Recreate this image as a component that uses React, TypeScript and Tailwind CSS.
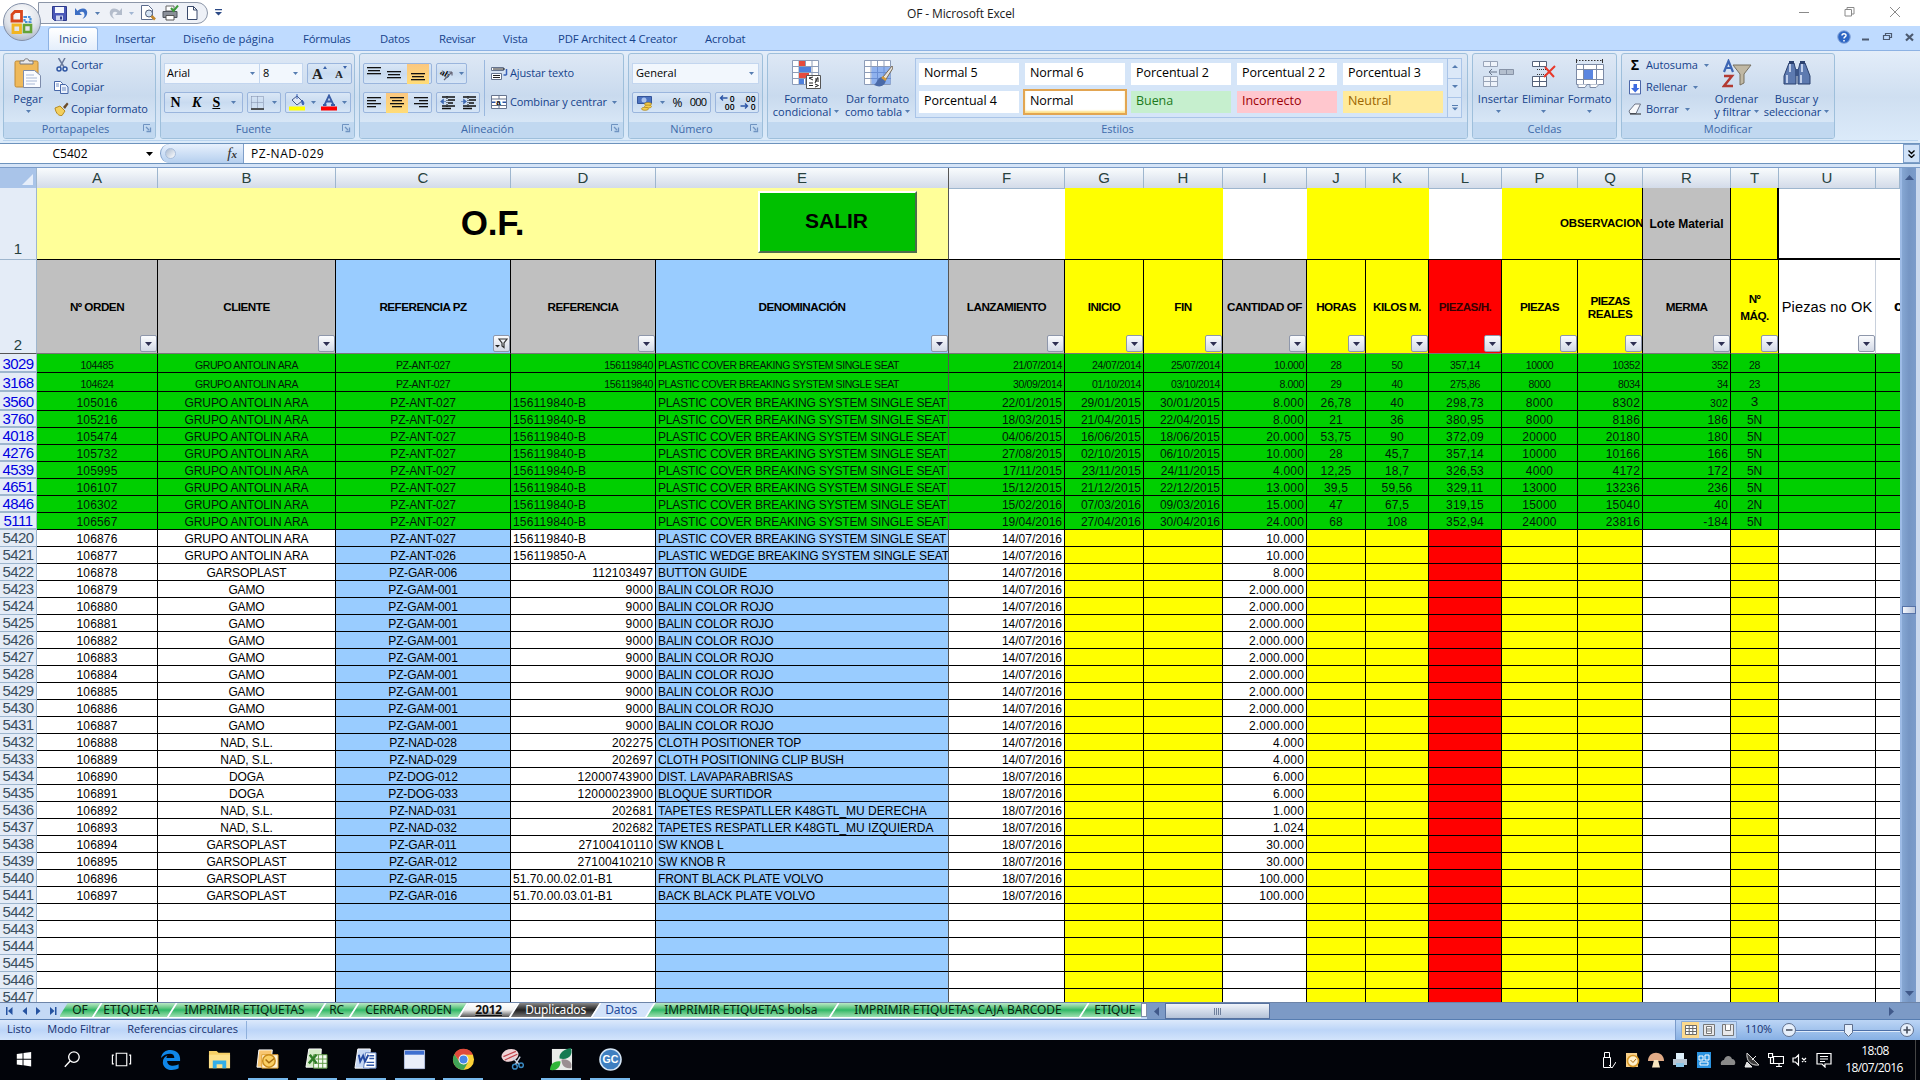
import React from "react";

type Kids = { children?: React.ReactNode };

const UI = "font-['Open_Sans','Noto_Sans',sans-serif]";
const ARIAL = "font-['Liberation_Sans',Arial,sans-serif]";

/* ---------- small shared pieces ---------- */

function Caret({ className = "" }: { className?: string }) {
  return (
    <svg width="5" height="3" viewBox="0 0 5 3" className={"shrink-0 " + className}>
      <path d="M0 0h5L2.5 3z" fill="#567db1" />
    </svg>
  );
}

function Launcher() {
  return (
    <svg width="9" height="9" viewBox="0 0 9 9" className="absolute right-[3px] top-[2px]">
      <path d="M.5 7V.5H7" fill="none" stroke="#6f93c1" />
      <path d="M3 3l3 3M7.5 3.5v4h-4" fill="none" stroke="#6f93c1" strokeWidth="1.3" />
    </svg>
  );
}

function Group({ w, label, launcher, children }: Kids & { w: string; label: string; launcher?: boolean }) {
  return (
    <section className={"flex h-[86px] shrink-0 flex-col overflow-hidden rounded-[3px] border border-[#9ebfdb] bg-gradient-to-b from-[#dee8f5] via-[#c9daee] to-[#e0eefb] " + w}>
      <div className="flex h-[68px] shrink-0">{children}</div>
      <div className="relative h-[16px] bg-[#c1d8f0] text-center text-[11px] leading-[14px] text-[#3e6aaa]">
        <span className={launcher ? "mr-[8px]" : ""}>{label}</span>
        {launcher && <Launcher />}
      </div>
    </section>
  );
}

function Btn({ children, className = "" }: Kids & { className?: string }) {
  return (
    <div className={"flex h-[21px] shrink-0 items-center justify-around rounded-[2px] border border-[#9ab5dd] bg-gradient-to-b from-[#dae7f6] via-[#c9dbf0] to-[#d6e5f6] " + className}>
      {children}
    </div>
  );
}

function Lines({ rows, className = "" }: { rows: number[][]; className?: string }) {
  return (
    <svg width="16" height="14" viewBox="0 0 16 14" className={className}>
      {rows.map(([x, y, w], i) => (
        <rect key={i} x={x} y={y} width={w} height="1.3" fill="#111" />
      ))}
    </svg>
  );
}

const LEFT = [[1, 1, 14], [1, 4, 9], [1, 7, 14], [1, 10, 9]];
const CENTER = [[1, 1, 14], [3, 4, 10], [1, 7, 14], [3, 10, 10]];
const RIGHT = [[1, 1, 14], [6, 4, 9], [1, 7, 14], [6, 10, 9]];
const TOP = [[1, 0, 14], [2, 3, 12], [1, 6, 14]];
const MID = [[1, 4, 14], [2, 7, 12], [1, 10, 14]];
const BOT = [[1, 6, 14], [2, 9, 12], [1, 12, 14]];

function Indent({ flip }: { flip?: boolean }) {
  return (
    <svg width="16" height="14" viewBox="0 0 16 14">
      <path d="M2 1h13M8 4h7M8 7h5M2 10h13M2 12.500h9" stroke="#111" strokeWidth="1.300" />
      <path d="M7 0v14" stroke="#111" strokeDasharray="1 1" />
      <path d={flip ? "M0 5.500h3M2.500 3l3 2.500-3 2.500z" : "M6 5.500H3M3.500 3l-3 2.500 3 2.500z"} fill="#3c66b0" stroke="#3c66b0" strokeWidth=".6" />
    </svg>
  );
}

/* ---------- title bar ---------- */

function OfficeButton() {
  return (
    <svg width="40" height="40" viewBox="0 0 40 40" className="absolute left-[2px] top-[2px] z-10">
      <defs>
        <radialGradient id="orb" cx=".5" cy=".3" r=".75">
          <stop offset="0" stopColor="#ffffff" />
          <stop offset=".6" stopColor="#dfe3ea" />
          <stop offset="1" stopColor="#a9b4c6" />
        </radialGradient>
      </defs>
      <circle cx="20" cy="20" r="18.500" fill="url(#orb)" stroke="#8390a8" />
      <g fill="none" strokeWidth="2.800">
        <path d="M13 9.500h6.500v9.500h-9.500v-6.500z" stroke="#d9461b" />
        <path d="M22.500 15h6v5h-6z" stroke="#4a8fd8" strokeWidth="2.200" strokeDasharray="2.500 1" />
        <path d="M11 23h7.500v7.500H11z" stroke="#f2b522" />
        <path d="M22 23h7v7h-7z" stroke="#64a336" strokeWidth="2.600" />
      </g>
    </svg>
  );
}

function TitleBar() {
  return (
    <header className="relative flex h-[26px] items-start bg-white">
      <OfficeButton />
      <div className="ml-[38px] mt-[2px] flex h-[22px] w-[170px] shrink-0 items-center rounded-r-full border border-[#8c96a8] bg-[#eef1f7] pl-[13px]">
        <svg width="15" height="15" viewBox="0 0 15 15">
          <path d="M.5.500h14v14h-12l-2-2z" fill="#4a58b8" stroke="#2d3a8c" />
          <path d="M3 1h9v6H3z" fill="#f4f7fd" />
          <path d="M4 9.500h7v5H4z" fill="#cdd4ee" />
          <path d="M8 10.500h2v3H8z" fill="#2d3a8c" />
        </svg>
        <svg width="14" height="13" viewBox="0 0 14 13" className="ml-[8px]">
          <path d="M0 1v7h7L4.500 5.800C7 3.600 10 5 9.500 9L7.500 12C14 9.500 13.500 1.500 8 1.500 5.500 1.500 3.800 2.500 2.600 4z" fill="#3d6fc4" />
        </svg>
        <Caret className="ml-[6px]" />
        <svg width="14" height="13" viewBox="0 0 14 13" className="ml-[8px]">
          <path d="M14 1v7H7l2.500-2.200C7 3.600 4 5 4.500 9l2 3C0 9.500.5 1.500 6 1.500c2.500 0 4.200 1 5.400 2.500z" fill="#b3bccb" />
        </svg>
        <Caret className="ml-[7px] opacity-50" />
        <svg width="16" height="16" viewBox="0 0 16 16" className="ml-[6px] shrink-0">
          <path d="M1.500.500h7l4 4v10h-11z" fill="#fff" stroke="#5b6b8c" />
          <circle cx="9" cy="8.500" r="3.500" fill="#d5e4f4" stroke="#4d5c78" />
          <path d="M11.500 11l3.500 3.500" stroke="#c2872b" strokeWidth="2.600" />
        </svg>
        <svg width="17" height="16" viewBox="0 0 17 16" className="ml-[6px] shrink-0">
          <path d="M4 1h8v5H4z" fill="#fff" stroke="#666" />
          <path d="M1 6.500h14v6H1z" fill="#8a8f98" stroke="#4f545d" />
          <path d="M4 10.500h8v4.500H4z" fill="#fff" stroke="#555" />
          <path d="M9 3l2.500 3L16 .5" fill="none" stroke="#3d9a3a" strokeWidth="2" />
        </svg>
        <svg width="12" height="14" viewBox="0 0 12 14" className="ml-[8px] shrink-0">
          <path d="M.5.500h6l3.500 3.500v9.500H.5z" fill="#fff" stroke="#39496b" />
          <path d="M6.500.500V4H10" fill="none" stroke="#39496b" />
        </svg>
      </div>
      <svg width="7" height="7" viewBox="0 0 7 7" className="ml-[7px] mt-[9px]">
        <path d="M0 0h7v1.300H0zM0 3h7L3.500 6.500z" fill="#2c4a86" />
      </svg>
      <div className="ml-[685px] mt-[5px] w-[120px] whitespace-nowrap text-[12px] leading-[18px] tracking-[-0.120px] text-[#1a1a1a]">OF - Microsoft Excel</div>
      <svg width="102" height="14" viewBox="0 0 102 14" className="ml-[772px] mt-[5px] shrink-0">
        <g fill="none" stroke="#8a8a8a">
          <path d="M0 7.500h10" />
          <path d="M46 4.500h6.500v6.500H46zM48 4.500v-2h7v6.500h-2.500" />
          <path d="M91 2l10 10M101 2L91 12" />
        </g>
      </svg>
    </header>
  );
}

const TABS: [string, string][] = [
  ["Insertar", "ml-[17px] w-[68px] tracking-[-0.150px]"],
  ["Diseño de página", "w-[120px]"],
  ["Fórmulas", "w-[77px] tracking-[-0.200px]"],
  ["Datos", "w-[59px] tracking-[-0.200px]"],
  ["Revisar", "w-[64px] tracking-[-0.250px]"],
  ["Vista", "w-[55px] tracking-[-0.100px]"],
  ["PDF Architect 4 Creator", "w-[147px] tracking-[-0.150px]"],
  ["Acrobat", "w-[60px] tracking-[-0.100px]"],
];

function TabRow() {
  return (
    <nav className="flex h-[24px] items-end bg-[#bfdbff] text-[11.300px] text-[#15428b]">
      <div className="ml-[48px] flex h-[23px] w-[50px] shrink-0 items-center justify-center rounded-t-[3px] border border-b-0 border-[#8db2e3] bg-gradient-to-b from-white to-[#e4eefb] pt-[1px]">Inicio</div>
      {TABS.map(([t, c]) => (
        <div key={t} className={"h-[21px] whitespace-nowrap leading-[20px] " + c}>{t}</div>
      ))}
      <svg width="80" height="14" viewBox="0 0 80 14" className="mb-[6px] ml-auto mr-[3px]">
        <circle cx="7" cy="7" r="6.300" fill="#2d66c4" stroke="#8aa9dc" />
        <path d="M5 5.500C5 3.200 9 3.200 9 5.400 9 7 7 6.800 7 8.600M7 10v1.400" stroke="#fff" strokeWidth="1.500" fill="none" />
        <path d="M25 9.500h7" stroke="#4c5a70" strokeWidth="2" />
        <path d="M46.500 5.500h6v4h-6zM48.500 5V3.500h6v4H53M46.500 5.500h6" fill="none" stroke="#4c5a70" strokeWidth="1.200" />
        <path d="M69 4l7 6.500M76 4l-7 6.500" stroke="#4c5a70" strokeWidth="2.200" />
      </svg>
    </nav>
  );
}

/* ---------- ribbon ---------- */

function SmallCmd({ icon, text, caret }: { icon: React.ReactNode; text: string; caret?: boolean }) {
  return (
    <div className="flex h-[22px] items-center whitespace-nowrap tracking-[-0.100px]">
      <span className="flex w-[19px] shrink-0 items-center justify-center">{icon}</span>
      {text}
      {caret && <Caret className="ml-[6px]" />}
    </div>
  );
}

function BigCmd({ w, icon, l1, l2 }: { w: string; icon: React.ReactNode; l1: string; l2?: string }) {
  return (
    <div className={"flex shrink-0 flex-col items-center whitespace-nowrap pt-[3px] " + w}>
      <div className="flex h-[33px] items-center justify-center">{icon}</div>
      <div className="mt-[2px] leading-[13px]">{l1}</div>
      {l2 ? (
        <div className="flex items-center leading-[13px]">
          {l2}
          <Caret className="ml-[3px]" />
        </div>
      ) : (
        <Caret className="mt-[5px]" />
      )}
    </div>
  );
}

function PasteIcon() {
  return (
    <svg width="28" height="32" viewBox="0 0 28 32">
      <rect x="1" y="3" width="23" height="26" rx="1.500" fill="#efb95a" stroke="#c08a35" />
      <path d="M6 5V3h4c0-3 5-3 5 0h4v3H6z" fill="#e8e8ea" stroke="#77797f" />
      <path d="M9.500 12.500h11l6 5v12h-17z" fill="#fbfcff" stroke="#7d8cab" />
      <path d="M12 17h8M12 20h11M12 23h11M12 26h9" stroke="#a9b9d6" />
    </svg>
  );
}

function GridIcon({ children }: Kids) {
  return (
    <svg width="30" height="30" viewBox="0 0 30 30">
      <path d="M1.500 1.500h26v24h-26z" fill="#fff" stroke="#8c9cb8" />
      <path d="M1 7.500h27M1 13.500h27M1 19.500h27M8 1v25M14.500 1v25M21 1v25" stroke="#8c9cb8" />
      {children}
    </svg>
  );
}

function Style({ text, c }: { text: string; c: string }) {
  return <div className={"flex h-[22px] w-[100px] items-center whitespace-nowrap pb-[1px] pl-[5px] text-[12.500px] tracking-[-0.050px] " + c}>{text}</div>;
}

function Ribbon() {
  return (
    <div className="flex h-[93px] border-t border-[#8db2e3] bg-gradient-to-b from-[#e3edf9] via-[#cfdff1] to-[#dcebfa] pl-[3px] pr-[2px] pt-[2px] text-[11px] text-[#15428b]">
      <div className="flex h-[88px] w-full gap-[4px] border-b border-[#b8d3ee]">
        <Group w="w-[153px]" label="Portapapeles" launcher>
          <BigCmd w="w-[46px] ml-[1px]" icon={<PasteIcon />} l1="Pegar" />
          <div className="ml-[1px] flex flex-col">
            <SmallCmd text="Cortar" icon={
              <svg width="12" height="14" viewBox="0 0 12 14"><path d="M2.500 0L8 9M9 0L4 9" stroke="#6b7b9c" strokeWidth="1.500" /><circle cx="3" cy="11" r="2" fill="none" stroke="#2f56a3" strokeWidth="1.500" /><circle cx="9" cy="11" r="2" fill="none" stroke="#2f56a3" strokeWidth="1.500" /></svg>
            } />
            <SmallCmd text="Copiar" icon={
              <svg width="15" height="13" viewBox="0 0 15 13"><path d="M.5.500h6l2 2v7h-8z" fill="#fff" stroke="#4767a8" /><path d="M6.500 3.500h5l2.500 2.500v6.500H6.500z" fill="#eaf1fc" stroke="#4767a8" /><path d="M2 3h3M2 5h3M8 7h4M8 9h4" stroke="#6f8cc4" /></svg>
            } />
            <SmallCmd text="Copiar formato" icon={
              <svg width="15" height="14" viewBox="0 0 15 14"><path d="M9 5l4-4.500 1.500 1.500L11 7z" fill="#6b4b2a" /><path d="M1 6l5-2 5 5-3 4.500C5 14 2 12 1 6z" fill="#f3cf5e" stroke="#b68b22" /></svg>
            } />
          </div>
        </Group>

        <Group w="w-[195px]" label="Fuente" launcher>
          <div className="flex flex-col pl-[3px] pt-[9px]">
            <div className="flex">
              <div className="flex h-[21px] w-[96px] items-center justify-between border border-[#c3d6ef] bg-[#f2f7fd] pl-[2px] pr-[4px] text-[11px] text-black">Arial<Caret /></div>
              <div className="flex h-[21px] w-[43px] items-center justify-between border border-l-0 border-[#c3d6ef] bg-[#f2f7fd] pl-[3px] pr-[4px] text-black">8<Caret /></div>
              <Btn className="ml-[4px] w-[45px] font-['Liberation_Serif'] font-bold text-[#222]">
                <span className="flex items-start text-[15px] leading-[20px]">A<i className="mt-[2px] h-0 w-0 border-x-[2.500px] border-b-[3px] border-x-transparent border-b-[#3a62a8]" /></span>
                <span className="flex items-start text-[11px] leading-[20px]">A<i className="mt-[2px] h-0 w-0 border-x-[2.500px] border-t-[3px] border-x-transparent border-t-[#3a62a8]" /></span>
              </Btn>
            </div>
            <div className="mt-[8px] flex">
              <Btn className="w-[79px] font-['Liberation_Serif'] text-[14px] font-bold text-black">
                <span>N</span><span className="italic">K</span><span className="underline">S</span><Caret />
              </Btn>
              <Btn className="ml-[4px] w-[34px]">
                <svg width="14" height="14" viewBox="0 0 14 14"><path d="M.5.500v12M6.500.500v12M12.500.500v12M.5.500h12M.5 6.500h12" stroke="#7c8ba8" strokeDasharray="1 1" /><path d="M0 13h13" stroke="#222" strokeWidth="1.500" /></svg>
                <Caret />
              </Btn>
              <Btn className="ml-[4px] w-[66px]">
                <svg width="17" height="17" viewBox="0 0 17 17"><path d="M3 6l5-4 5 5-5 4z" fill="#dfe7f5" stroke="#44598a" /><path d="M13 6c2 2 2.500 4 1 5-1-1-1.500-3-1-5zM8 0v5" fill="#3a62b8" stroke="#3a62b8" /><path d="M0 12.500h16v4H0z" fill="#ffff00" /></svg>
                <Caret />
                <svg width="16" height="17" viewBox="0 0 16 17"><path d="M3.500 11L8 1.500 12.500 11M5.500 7.500h5M2 11h3.500M10 11h4" fill="none" stroke="#3a5da5" strokeWidth="1.800" /><path d="M0 12.500h16v4H0z" fill="#ff0000" /></svg>
                <Caret />
              </Btn>
            </div>
          </div>
        </Group>

        <Group w="w-[265px]" label="Alineación" launcher>
          <div className="flex flex-col pl-[3px] pt-[9px]">
            <div className="flex">
              <Btn className="w-[69px]">
                <Lines rows={TOP} /><Lines rows={MID} />
                <span className="flex h-[20px] w-[22px] items-center justify-center bg-gradient-to-b from-[#fbc77f] to-[#ffdc77]"><Lines rows={BOT} /></span>
              </Btn>
              <Btn className="ml-[4px] w-[31px]">
                <svg width="15" height="14" viewBox="0 0 15 14"><text x="1" y="9" fontSize="9" fontWeight="700" fontFamily="Liberation Serif" transform="rotate(30 5 7)">ab</text><path d="M5 13L13 5M13 5v3.500M13 5H9.500" stroke="#667" strokeWidth="1.200" fill="none" /></svg>
                <Caret />
              </Btn>
            </div>
            <div className="mt-[8px] flex">
              <Btn className="w-[69px]">
                <Lines rows={LEFT} />
                <span className="flex h-[20px] w-[22px] items-center justify-center bg-gradient-to-b from-[#fbc77f] to-[#ffdc77]"><Lines rows={CENTER} /></span>
                <Lines rows={RIGHT} />
              </Btn>
              <Btn className="ml-[4px] w-[44px]"><Indent /><Indent flip /></Btn>
            </div>
          </div>
          <div className="ml-[4px] mt-[6px] h-[56px] w-px shrink-0 bg-[#9ab8de]" />
          <div className="ml-[6px] flex flex-col pt-[9px] tracking-[-0.120px]">
            <div className="flex h-[21px] items-center whitespace-nowrap">
              <svg width="17" height="15" viewBox="0 0 17 15" className="mr-[2px]"><path d="M.5 1.500h12v3H.5zM.5 7.500h10v6H.5z" fill="#fff" stroke="#66748e" /><path d="M2 3h12M2 9.500h7M2 11.500h7" stroke="#222" /><path d="M15.500 3v6M15.500 9h-3" stroke="#3a62b8" strokeWidth="1.500" fill="none" /></svg>
              Ajustar texto
            </div>
            <div className="mt-[8px] flex h-[21px] items-center whitespace-nowrap">
              <svg width="17" height="15" viewBox="0 0 17 15" className="mr-[2px]"><path d="M.5.500h15v13H.5zM.5 4h15M.5 10.500h15M8 .5V4M8 10.500v3" fill="#fff" stroke="#66748e" /><path d="M1 7.200h3.500M11.500 7.200H15" stroke="#2d55a5" strokeWidth="1.500" /><text x="5.300" y="9.500" fontSize="8" fontWeight="700" fontFamily="Liberation Sans">a</text></svg>
              Combinar y centrar
              <Caret className="ml-[5px]" />
            </div>
          </div>
        </Group>

        <Group w="w-[135px]" label="Número" launcher>
          <div className="flex flex-col pl-[3px] pt-[9px]">
            <div className="flex h-[21px] w-[127px] items-center justify-between border border-[#c3d6ef] bg-[#f2f7fd] pl-[3px] pr-[4px] text-black">General<Caret /></div>
            <div className="mt-[8px] flex text-[11px] text-black">
              <Btn className="w-[79px]">
                <svg width="16" height="16" viewBox="0 0 16 16"><path d="M.5 1.500h14v7H.5z" fill="#4d73c0" stroke="#34549a" /><circle cx="7" cy="5" r="2.500" fill="#a9c2ee" /><ellipse cx="11" cy="9" rx="3.500" ry="1.500" fill="#f6cf4c" stroke="#a8801a" strokeWidth=".7" /><ellipse cx="11" cy="11.500" rx="3.500" ry="1.500" fill="#f6cf4c" stroke="#a8801a" strokeWidth=".7" /><ellipse cx="8" cy="13.800" rx="3.500" ry="1.500" fill="#f6cf4c" stroke="#a8801a" strokeWidth=".7" /></svg>
                <Caret />
                <span className="text-[12px]">%</span>
                <span className="tracking-[-0.800px]">000</span>
              </Btn>
              <Btn className="ml-[4px] w-[44px]">
                <svg width="16" height="17" viewBox="0 0 16 17"><g fontFamily="Open Sans" fontSize="8.500" fontWeight="600" textAnchor="end"><text x="15.500" y="7.500">0</text><text x="15.500" y="15.500">00</text></g><path d="M8.500 4H2M4 1.500L1.500 4 4 6.500" stroke="#2d55a5" strokeWidth="1.400" fill="none" /></svg>
                <svg width="16" height="17" viewBox="0 0 16 17"><g fontFamily="Open Sans" fontSize="8.500" fontWeight="600" textAnchor="end"><text x="15.500" y="7.500">00</text><text x="15.500" y="15.500">0</text></g><path d="M.5 12h6.500M5 9.500L7.500 12 5 14.500" stroke="#2d55a5" strokeWidth="1.400" fill="none" /></svg>
              </Btn>
            </div>
          </div>
        </Group>

        <Group w="w-[701px]" label="Estilos">
          <BigCmd w="w-[70px] ml-[3px]" l1="Formato" l2="condicional" icon={
            <GridIcon><path d="M8 2h6v5H8zM8 14h10v5H8z" fill="#e64b3c" /><path d="M8 8h12v5H8zM8 20h5v5H8z" fill="#4e80dc" /><path d="M15.500 16.500h14v13h-14z" fill="#fff" stroke="#555" /><path d="M18 19l4-1M18 19l4 2M18 24h4M18 26.500h4M24 20h4M24 22h4M27 18l-3 6M24 25l3.500 1.500-3.500 1.500" stroke="#222" fill="none" /></GridIcon>
          } />
          <BigCmd w="w-[73px]" l1="Dar formato" l2="como tabla" icon={
            <GridIcon><path d="M8.500 8h19v17h-19z" fill="#8fb2ee" /><path d="M8 13.500h20M8 19.500h20M14.500 8v17M21 8v17" stroke="#6a8fd4" /><path d="M29 7L20 18l2.500 3L30 9z" fill="#e8e4dc" stroke="#776a58" /><path d="M19 18c-4 0-5 6-8 8 6 3 11 1 12-5z" fill="#4a6aa8" /><path d="M19 18l4 3" stroke="#d49b3a" strokeWidth="2.500" /></GridIcon>
          } />
          <div className="ml-[1px] mt-[4px] flex h-[60px] w-[547px] border border-[#a9c4e8] bg-[#d5e5f8]">
            <div className="ml-[3px] mt-[4px] grid h-[51px] grid-cols-[repeat(5,100px)] grid-rows-[22px_22px] gap-x-[6px] gap-y-[6px]">
              <Style text="Normal 5" c="bg-white text-black" />
              <Style text="Normal 6" c="bg-white text-black" />
              <Style text="Porcentual 2" c="bg-white text-black" />
              <Style text="Porcentual 2 2" c="bg-white text-black" />
              <Style text="Porcentual 3" c="bg-white text-black" />
              <Style text="Porcentual 4" c="bg-white text-black" />
              <Style text="Normal" c="bg-white text-black outline-2 outline-[#e2a552] shadow-[inset_0_-2px_2px_#ffe28a]" />
              <Style text="Buena" c="bg-[#c6efce] text-[#1c7a1c]" />
              <Style text="Incorrecto" c="bg-[#ffc7ce] text-[#9c0006]" />
              <Style text="Neutral" c="bg-[#ffeb9c] text-[#9c6500]" />
            </div>
            <div className="ml-auto flex w-[14px] flex-col border-l border-[#a9c4e8]">
              {["M0 3h6L3 0z", "M0 0h6L3 3z", "M0 0h6v1H0zM0 2.500h6L3 5.500z"].map((d) => (
                <div key={d} className="flex flex-1 items-center justify-center border-b border-[#a9c4e8] bg-[#dbe8f8] last:border-b-0">
                  <svg width="6" height="6" viewBox="0 0 6 6"><path d={d} fill="#567db1" /></svg>
                </div>
              ))}
            </div>
          </div>
        </Group>

        <Group w="w-[145px]" label="Celdas">
          <BigCmd w="w-[46px] ml-[2px]" l1="Insertar" icon={
            <svg width="32" height="30" viewBox="0 0 32 30"><path d="M1.500 2.500h14v5h-14zM8.500 2.500v5M1.500 17.500h14v10h-14zM8.500 17.500v10M1.500 22.500h14" fill="#eef3fa" stroke="#98a4b8" /><path d="M17.500 10.500h14v5h-14zM24.500 10.500v5" fill="#b4bfce" stroke="#8793a7" /><path d="M15 13H7M10 10l-3 3 3 3" stroke="#66748a" fill="none" /></svg>
          } />
          <BigCmd w="w-[44px]" l1="Eliminar" icon={
            <svg width="28" height="30" viewBox="0 0 28 30"><path d="M3.500 2.500h14v5h-14zM10.500 2.500v5M3.500 17.500h14v10h-14zM10.500 17.500v10M3.500 22.500h14" fill="#fff" stroke="#55627a" /><path d="M8 10.500h10M8 15.500h10" stroke="#333" strokeDasharray="1 1" /><path d="M16 8l9 10M26 7L15 18" stroke="#e8392b" strokeWidth="2" /></svg>
          } />
          <BigCmd w="w-[49px]" l1="Formato" icon={
            <svg width="32" height="30" viewBox="0 0 32 30"><path d="M2 1.500h26" stroke="#333" strokeDasharray="1.500 1.500" /><path d="M2.500 0v4M28.500 0v4" stroke="#333" /><path d="M2.500 5.500h27v20h-27zM2.500 10.500h27M2.500 20.500h27M9.500 5.500v20M22.500 5.500v20" fill="#fff" stroke="#7c8aa5" /><path d="M10 11h9v9h-9z" fill="#5b86e0" /><path d="M4 25.500v3h7l2-3M16 25.500v3h6l3-3" fill="#fff" stroke="#7c8aa5" /></svg>
          } />
        </Group>

        <Group w="w-[214px]" label="Modificar">
          <div className="flex w-[87px] shrink-0 flex-col pl-[5px]">
            <SmallCmd text="Autosuma" caret icon={<span className="mr-[3px] font-['Liberation_Sans'] text-[14px] font-bold leading-[16px] text-black">Σ</span>} />
            <SmallCmd text="Rellenar" caret icon={<svg width="13" height="15" viewBox="0 0 13 15" className="mr-[3px]"><path d="M.5.500h11v13.500H.5z" fill="#fff" stroke="#4c66a8" /><path d="M4.500 4h3.500v4h2.500L6.200 12.500 2 8h2.500z" fill="#3d6be0" /></svg>} />
            <SmallCmd text="Borrar" caret icon={<svg width="14" height="12" viewBox="0 0 14 12" className="mr-[3px]"><path d="M1 8l6-7h5.500L8 10.500H2z" fill="#f8f9fb" stroke="#6c7486" /><path d="M2 11h11" stroke="#222" /></svg>} />
          </div>
          <BigCmd w="w-[55px]" l1="Ordenar" l2="y filtrar" icon={
            <svg width="30" height="30" viewBox="0 0 30 30"><path d="M11 6h18l-7 9v9l-4 2V15z" fill="#c0b8a4" stroke="#777060" /><path d="M2 13L6.500 2 11 13M3.500 9h6" stroke="#3d66b4" strokeWidth="2.200" fill="none" /><path d="M2 17h8L2 27h9" stroke="#b23a32" strokeWidth="2.500" fill="none" /></svg>
          } />
          <BigCmd w="w-[65px]" l1="Buscar y" l2="seleccionar" icon={
            <svg width="30" height="28" viewBox="0 0 30 28"><path d="M7 3h5l2 8v13H2v-8z" fill="#5d7ab0" stroke="#2b416f" /><path d="M18 3h5l5 13v8H16V11z" fill="#5d7ab0" stroke="#2b416f" /><path d="M13 9h4v7h-4z" fill="#3b5588" /><path d="M5 15v8M19 15v8M8 4v8M20 4v8" stroke="#cbd9f2" strokeWidth="1.800" /><path d="M7 1h5v3H7zM18 1h5v3h-5z" fill="#2b416f" /></svg>
          } />
        </Group>
      </div>
    </div>
  );
}

function FormulaBar() {
  return (
    <div className="flex h-[21px] shrink-0 border-y border-[#6d93bd] bg-white text-[12px] text-black">
      <div className="flex w-[160px] items-center">
        <span className="w-[140px] text-center tracking-[0px]">C5402</span>
        <svg width="7" height="4" viewBox="0 0 7 4" className="ml-[6px]"><path d="M0 0h7L3.500 4z" fill="#000" /></svg>
      </div>
      <div className="flex w-[84px] items-center justify-between rounded-l-full border-l border-r border-[#7f9fc9] bg-gradient-to-b from-[#e8f1fd] to-[#b5cfee] pl-[4px] pr-[6px]">
        <span className="h-[11px] w-[11px] rounded-full border border-[#a9bedb] bg-gradient-to-br from-[#a9b9cf] to-white" />
        <span className="font-['Liberation_Serif'] text-[15px] italic leading-none text-[#333]">f<span className="text-[11px] font-bold">x</span></span>
      </div>
      <div className="flex flex-1 items-center pl-[7px] tracking-[0.550px]">PZ-NAD-029</div>
      <div className="flex w-[17px] items-center justify-center border border-[#7f9fc9] bg-[#d0e2f8]">
        <svg width="7" height="8" viewBox="0 0 7 8"><path d="M.5.500l3 3 3-3M.5 4.500l3 3 3-3" fill="none" stroke="#000" strokeWidth="1.300" /></svg>
      </div>
    </div>
  );
}

/* ---------- worksheet ---------- */

const COLS = "grid grid-cols-[37px_121px_178px_175px_145px_293px_116px_79px_79px_84px_59px_63px_73px_76px_65px_88px_48px_97px_24px]";
const LETTERS = ["A", "B", "C", "D", "E", "F", "G", "H", "I", "J", "K", "L", "P", "Q", "R", "T", "U", ""];

const PC = "PLASTIC COVER BREAKING SYSTEM SINGLE SEAT";
const GA = "GRUPO ANTOLIN ARA";
const R1 = "156119840";
const RB = "156119840-B";

const DONE: string[][] = [
  ["3029", "104485", GA, "PZ-ANT-027", R1, PC, "21/07/2014", "24/07/2014", "25/07/2014", "10.000", "28", "50", "357,14", "10000", "10352", "352", "28"],
  ["3168", "104624", GA, "PZ-ANT-027", R1, PC, "30/09/2014", "01/10/2014", "03/10/2014", "8.000", "29", "40", "275,86", "8000", "8034", "34", "23"],
  ["3560", "105016", GA, "PZ-ANT-027", RB, PC, "22/01/2015", "29/01/2015", "30/01/2015", "8.000", "26,78", "40", "298,73", "8000", "8302", "302", "3"],
  ["3760", "105216", GA, "PZ-ANT-027", RB, PC, "18/03/2015", "21/04/2015", "22/04/2015", "8.000", "21", "36", "380,95", "8000", "8186", "186", "5N"],
  ["4018", "105474", GA, "PZ-ANT-027", RB, PC, "04/06/2015", "16/06/2015", "18/06/2015", "20.000", "53,75", "90", "372,09", "20000", "20180", "180", "5N"],
  ["4276", "105732", GA, "PZ-ANT-027", RB, PC, "27/08/2015", "02/10/2015", "06/10/2015", "10.000", "28", "45,7", "357,14", "10000", "10166", "166", "5N"],
  ["4539", "105995", GA, "PZ-ANT-027", RB, PC, "17/11/2015", "23/11/2015", "24/11/2015", "4.000", "12,25", "18,7", "326,53", "4000", "4172", "172", "5N"],
  ["4651", "106107", GA, "PZ-ANT-027", RB, PC, "15/12/2015", "21/12/2015", "22/12/2015", "13.000", "39,5", "59,56", "329,11", "13000", "13236", "236", "5N"],
  ["4846", "106302", GA, "PZ-ANT-027", RB, PC, "15/02/2016", "07/03/2016", "09/03/2016", "15.000", "47", "67,5", "319,15", "15000", "15040", "40", "2N"],
  ["5111", "106567", GA, "PZ-ANT-027", RB, PC, "19/04/2016", "27/04/2016", "30/04/2016", "24.000", "68", "108", "352,94", "24000", "23816", "-184", "5N"],
];

const D1 = "14/07/2016";
const D2 = "18/07/2016";
const BALIN = ["GAMO", "PZ-GAM-001", "9000", "BALIN COLOR ROJO", D1, "2.000.000"];
const OPEN: string[][] = [
  [GA, "PZ-ANT-027", RB, PC, D1, "10.000"],
  [GA, "PZ-ANT-026", "156119850-A", "PLASTIC WEDGE BREAKING SYSTEM SINGLE SEAT", D1, "10.000"],
  ["GARSOPLAST", "PZ-GAR-006", "112103497", "BUTTON GUIDE", D1, "8.000"],
  BALIN, BALIN, BALIN, BALIN, BALIN, BALIN, BALIN, BALIN, BALIN,
  ["NAD, S.L.", "PZ-NAD-028", "202275", "CLOTH POSITIONER TOP", D1, "4.000"],
  ["NAD, S.L.", "PZ-NAD-029", "202697", "CLOTH POSITIONING CLIP BUSH", D1, "4.000"],
  ["DOGA", "PZ-DOG-012", "12000743900", "DIST. LAVAPARABRISAS", D2, "6.000"],
  ["DOGA", "PZ-DOG-033", "12000023900", "BLOQUE SURTIDOR", D2, "6.000"],
  ["NAD, S.L.", "PZ-NAD-031", "202681", "TAPETES RESPATLLER K48GTL_MU DERECHA", D2, "1.000"],
  ["NAD, S.L.", "PZ-NAD-032", "202682", "TAPETES RESPATLLER K48GTL_MU IZQUIERDA", D2, "1.024"],
  ["GARSOPLAST", "PZ-GAR-011", "27100410110", "SW KNOB L", D2, "30.000"],
  ["GARSOPLAST", "PZ-GAR-012", "27100410210", "SW KNOB R", D2, "30.000"],
  ["GARSOPLAST", "PZ-GAR-015", "51.70.00.02.01-B1", "FRONT BLACK PLATE VOLVO", D2, "100.000"],
  ["GARSOPLAST", "PZ-GAR-016", "51.70.00.03.01-B1", "BACK BLACK PLATE VOLVO", D2, "100.000"],
];

const ALIGN = ["c", "c", "c", "d", "l", "r", "r", "r", "r", "c", "c", "c", "c", "r", "r", "c", "c", "c"];
const OPEN_BG = [
  "bg-white", "bg-white", "bg-[#99ccff]", "bg-white", "bg-[#99ccff]", "bg-white", "bg-[#ffff00]", "bg-[#ffff00]", "bg-white",
  "bg-[#ffff00]", "bg-[#ffff00]", "bg-[#ff0000]", "bg-[#ffff00]", "bg-[#ffff00]", "bg-white", "bg-[#ffff00]", "bg-white", "bg-white",
];

function alignClass(i: number, t: string) {
  const a = ALIGN[i];
  if (a === "c") return "text-center";
  if (a === "l") return "text-left pl-[2px]";
  if (a === "r") return "text-right pr-[2px]";
  return /^\d+$/.test(t) ? "text-right pr-[2px]" : "text-left pl-[2px]";
}

/* digit-heavy cells are set slightly wider than lettered ones */
function trackClass(t: string, small: boolean) {
  const digits = /^[\d.,/-]+(-?[AB]1?)?$/.test(t);
  if (small) return digits ? "tracking-[-0.350px]" : "tracking-[-0.420px]";
  if (t.includes("/")) return "tracking-[0px]";
  if (t.startsWith("51.")) return "tracking-[0.050px]";
  if (t.startsWith("PLASTIC")) return "tracking-[-0.170px]";
  if (/^TAPETES/.test(t)) return "tracking-[0px]";
  return digits ? "tracking-[0.180px]" : "tracking-[-0.120px]";
}

function sizeClass(no: string, i: number, small: boolean) {
  if (small) return "pt-[3px] text-[10.500px] leading-[16px] ";
  if (no !== "3560") return "pt-[1px] text-[12px] leading-[17px] ";
  if (i === 14) return "pt-[3px] text-[10.500px] leading-[16px] ";
  if (i === 15) return "pt-[2px] text-[13.500px] leading-[16px] ";
  return "pt-[3px] text-[12px] leading-[17px] ";
}

function DataRow({ no, cells, done, h }: { no: string; cells: string[]; done?: boolean; h: string }) {
  const tall = h === "h-[19px]";
  const small = tall && no !== "3560";
  return (
    <div className={COLS + " " + h}>
      <div className={"overflow-hidden border-b border-r border-[#9eb6ce] bg-[#e4ecf7] text-center text-[15px] tracking-[-0.550px] " + (tall ? "leading-[20px] " : "leading-[16px] ") + (done ? "border-b-2 text-[#0000e0]" : "text-[#3a4f60]")}>{no}</div>
      {LETTERS.map((_, i) => {
        const t = cells[i] ?? "";
        return (
          <div
            key={i}
            className={
              "overflow-hidden whitespace-nowrap border-b border-black " +
              (i === 17 ? "" : i === 4 ? "border-r border-r-[#555] " : "border-r ") +
              (done ? "bg-[#00cf00] text-[#03180a] " : OPEN_BG[i] + " text-black ") +
              sizeClass(no, i, small) +
              alignClass(i, t) + " " + trackClass(t, small)
            }
          >
            {t}
          </div>
        );
      })}
    </div>
  );
}

const HEAD: [string, string][] = [
  ["Nº ORDEN", "bg-[#c0c0c0]"], ["CLIENTE", "bg-[#c0c0c0]"], ["REFERENCIA PZ", "bg-[#99ccff]"], ["REFERENCIA", "bg-[#c0c0c0]"],
  ["DENOMINACIÓN", "bg-[#99ccff] border-r-[#555]"], ["LANZAMIENTO", "bg-[#c0c0c0]"], ["INICIO", "bg-[#ffff00]"], ["FIN", "bg-[#ffff00]"],
  ["CANTIDAD OF", "bg-[#c0c0c0]"], ["HORAS", "bg-[#ffff00]"], ["KILOS M.", "bg-[#ffff00]"], ["PIEZAS/H.", "bg-[#ff0000] text-[#350000]"],
  ["PIEZAS", "bg-[#ffff00]"], ["PIEZAS\nREALES", "bg-[#ffff00] leading-[13px]"], ["MERMA", "bg-[#c0c0c0]"], ["Nº\nMÁQ.", "bg-[#ffff00] leading-[17px]"],
  ["Piezas no OK", "bg-white"], ["c", "bg-white"],
];

function FilterButton({ active }: { active?: boolean }) {
  return (
    <span className="absolute bottom-[1px] right-0 flex h-[17px] w-[17px] items-center justify-center rounded-[2px] border border-[#8e97ab] bg-gradient-to-b from-[#fbfcfe] to-[#d3d9e6]">
      {active ? (
        <svg width="13" height="11" viewBox="0 0 13 11"><path d="M4 1h8L9 5v4.500L7 8V5z" fill="none" stroke="#333" strokeWidth="1.200" /><path d="M0 7h5L2.500 9.500z" fill="#222" /></svg>
      ) : (
        <svg width="7" height="4" viewBox="0 0 7 4"><path d="M0 0h7L3.500 4z" fill="#2d2f52" /></svg>
      )}
    </span>
  );
}

function Sheet() {
  return (
    <div className={"h-[834px] w-[1900px] shrink-0 overflow-hidden bg-white " + ARIAL}>
      <div className={COLS + " h-[20px]"}>
        <div className="flex items-end justify-end border-b border-r border-[#9eb6ce] bg-[#a9c4e9] p-[3px]">
          <svg width="11" height="11" viewBox="0 0 11 11"><path d="M11 0v11H0z" fill="#e6eefa" /></svg>
        </div>
        {LETTERS.map((l, i) => (
          <div key={i} className={"border-b border-r border-[#9eb6ce] bg-gradient-to-b from-[#f9fcfd] to-[#d3dbe9] text-center text-[15px] leading-[20px] text-[#27413e] " + (i === 4 ? "border-r-[#555]" : "")}>{l}</div>
        ))}
      </div>

      <div className={COLS + " h-[72px] text-[12px] font-bold"}>
        <div className="flex items-end justify-center border-b border-r border-[#9eb6ce] bg-[#e4ecf7] text-[15px] font-normal leading-[20px] text-[#27413e]">1</div>
        <div className="relative col-span-5 flex items-center justify-center border-b border-r border-b-black border-r-[#555] bg-[#ffff99] text-[35px]">
          <span className="tracking-[-0.200px]">O.F.</span>
          <button className="absolute right-[31px] top-[3px] flex h-[62px] w-[159px] items-center justify-center border-2 border-b-[#4d6b4d] border-l-white border-r-[#4d6b4d] border-t-white bg-[#00c000] pb-[2px] pr-[2px] text-[21px] text-black">SALIR</button>
        </div>
        <div className="border-b border-black" />
        <div className="col-span-2 border-b border-black bg-[#ffff00]" />
        <div className="border-b border-black" />
        <div className="col-span-2 border-b border-black bg-[#ffff00]" />
        <div className="border-b border-black" />
        <div className="col-span-2 flex items-center overflow-hidden border-b border-r border-black bg-[#ffff00] pl-[58px] text-[11.500px] tracking-[-0.100px]">OBSERVACION</div>
        <div className="flex items-center justify-center whitespace-nowrap border-b border-r border-black bg-[#c0c0c0] text-[12px] tracking-[0px]">Lote Material</div>
        <div className="border-b border-r-2 border-black bg-[#ffff00]" />
        <div className="col-span-2 border-b-2 border-black" />
      </div>

      <div className={COLS + " h-[94px] text-[11.700px] font-bold"}>
        <div className="flex items-end justify-center border-b border-r border-[#9eb6ce] border-b-[#555] bg-[#e4ecf7] text-[15px] font-normal leading-[16px] text-[#27413e]">2</div>
        {HEAD.map(([t, c], i) => (
          <div
            key={i}
            className={
              "relative flex items-center whitespace-pre border-b border-b-[#777] text-center " +
              (i === 17 ? "overflow-hidden pl-[18px] text-[15px] " : i === 16 ? "justify-center border-r border-r-[#c8d0dc] text-[14.667px] font-normal tracking-[0.080px] " : "justify-center border-r border-black tracking-[-0.500px] ") + c
            }
          >
            {t}
            {i < 17 && <FilterButton active={i === 2} />}
          </div>
        ))}
      </div>

      {DONE.map((r, i) => (
        <DataRow key={r[0]} no={r[0]} cells={r.slice(1)} done h={i < 3 ? "h-[19px]" : "h-[17px]"} />
      ))}
      {Array.from({ length: 28 }, (_, i) => {
        const r = OPEN[i];
        return <DataRow key={i} no={String(5420 + i)} cells={r ? [String(106876 + i), ...r.slice(0, 5), "", "", r[5]] : []} h="h-[17px]" />;
      })}
    </div>
  );
}

function VScroll() {
  return (
    <div className="flex w-[20px] shrink-0">
      <div className="flex w-[16px] flex-col items-center border-l-2 border-[#9dbbe6] bg-gradient-to-r from-[#86a7d3] via-[#7696c4] to-[#7c9ccb]">
        <svg width="9" height="5" viewBox="0 0 9 5" className="mt-[7px]"><path d="M0 5h9L4.500 0z" fill="#40598a" /></svg>
        <div className="mt-[426px] h-[8px] w-[14px] border border-[#5673a8] bg-gradient-to-r from-[#f4f7fc] to-[#b9c6dd]" />
        <svg width="9" height="5" viewBox="0 0 9 5" className="mb-[6px] mt-auto"><path d="M0 0h9L4.500 5z" fill="#40598a" /></svg>
      </div>
      <div className="w-[4px] bg-[#cbd9ee]" />
    </div>
  );
}

/* ---------- sheet tabs ---------- */

const GREEN = "bg-gradient-to-b from-[#b9e8c6] via-[#2bb866] to-[#9be0b2] text-[#08240f]";
const SHEETS: [string, string][] = [
  ["OF", "w-[35px] " + GREEN],
  ["ETIQUETA", "w-[75px] pr-[6px] " + GREEN],
  ["IMPRIMIR ETIQUETAS", "w-[149px] pr-[5px] " + GREEN],
  ["RC", "w-[33px] pr-[3px] " + GREEN],
  ["CERRAR ORDEN", "w-[109px] " + GREEN],
  ["2012", "w-[51px] font-bold underline text-[#111] bg-gradient-to-b from-white via-[#f0f0f0] to-[#555]"],
  ["Duplicados", "w-[82px] text-white bg-gradient-to-b from-[#8a8a8a] via-[#222] to-[#777]"],
  ["Datos", "w-[54px] pr-[4px] text-[#244b9a] bg-[#d3e3fa]"],
  ["IMPRIMIR ETIQUETAS bolsa", "w-[184px] pr-[3px] " + GREEN],
  ["IMPRIMIR ETIQUETAS CAJA BARCODE", "w-[250px] pr-[3px] " + GREEN],
  ["ETIQUE", "w-[64px] pr-[3px] " + GREEN],
];

function SheetTabs() {
  return (
    <div className="flex h-[17px] shrink-0 border-t border-[#6d84a8] bg-[#c4d9f5]">
      <svg width="60" height="16" viewBox="0 0 60 16" className="shrink-0">
        <g fill="#2552a0">
          <path d="M6 4h1.500v8H6zM12.500 4v8L8 8zM27 4v8l-4.500-4zM36 4v8l4.500-4zM50 4v8l4.500-4zM55 4h1.500v8H55z" />
        </g>
      </svg>
      <div className="flex h-[16px] w-[1081px] shrink-0 overflow-hidden pl-[3px]">
        {SHEETS.map(([t, c]) => (
          <div key={t} className={"flex h-[15px] shrink-0 -skew-x-[32deg] items-center justify-center border-b border-r-2 border-white " + c}>
            <span className={"skew-x-[32deg] whitespace-nowrap font-['Noto_Sans','Open_Sans',sans-serif] text-[12px] leading-[14px] " + (t === "ETIQUETA" ? "tracking-[0.100px]" : t.includes("IMPRIMIR") ? "tracking-[-0.080px]" : "tracking-[-0.200px]")}>{t}</span>
          </div>
        ))}
      </div>
      <div className="h-[14px] w-[6px] shrink-0 border border-[#7f8ea8] bg-white" />
      <div className="flex flex-1 bg-[#7c9ac6]">
        <div className="flex w-[18px] items-center justify-center"><svg width="5" height="9" viewBox="0 0 5 9"><path d="M5 0v9L0 4.500z" fill="#40598a" /></svg></div>
        <div className="flex w-[105px] items-center justify-center gap-[1px] border border-[#56719f] bg-gradient-to-b from-[#f0f4fa] to-[#b4c2d8]">
          {[0, 1, 2, 3].map((k) => <span key={k} className="h-[7px] w-px bg-[#6e7f9c]" />)}
        </div>
        <svg width="5" height="9" viewBox="0 0 5 9" className="ml-auto mr-[26px] mt-[4px]"><path d="M0 0v9l5-4.500z" fill="#40598a" /></svg>
      </div>
    </div>
  );
}

function StatusBar() {
  return (
    <div className="flex h-[21px] shrink-0 items-center border-t border-[#567db1] bg-gradient-to-b from-[#dce9fb] via-[#bcd5f8] to-[#d3e4fb] pb-[1px] text-[11px] text-[#15306f]">
      <span className="ml-[7px]">Listo</span>
      <span className="ml-[16px]">Modo Filtrar</span>
      <span className="ml-[17px] tracking-[-0.060px]">Referencias circulares</span>
      <span className="ml-[8px] h-[18px] w-px bg-[#8fb0dc]" />
      <div className="ml-auto flex h-[20px] w-[245px] items-center border-l border-[#7a9bcb] bg-gradient-to-b from-[#bcd5f5] to-[#87b0e4] pl-[5px] pr-[3px]">
        <svg width="56" height="18" viewBox="0 0 56 18">
          <path d="M.5.500h55v17H.5z" fill="#c3d9f4" stroke="#8aa9d4" />
          <path d="M1 1h17v16H1z" fill="#fcd98e" />
          <path d="M4.500 4.500h11v9h-11zM4.500 7.500h11M4.500 10.500h11M8.200 4.500v9M11.800 4.500v9" fill="#fff" stroke="#6a6a6a" />
          <path d="M22.500 3.500h11v11h-11z" fill="#e8e8ea" stroke="#777" /><path d="M25.500 5.500h5v7h-5zM26 8h4M26 10h4" fill="#fff" stroke="#777" />
          <path d="M41.500 3.500h11v11h-11z" fill="#e8e8ea" stroke="#777" /><path d="M44.500 3.500v6h5v-6" fill="#fff" stroke="#777" />
        </svg>
        <span className="ml-[8px] tracking-[-0.300px]">110%</span>
        <svg width="136" height="18" viewBox="0 0 136 18" className="ml-auto shrink-0">
          <path d="M14 9.500h106" stroke="#4d6fa8" />
          <path d="M14 10.500h106" stroke="#dfebfb" />
          <g fill="#e6effb" stroke="#5f6f8d"><circle cx="8" cy="9" r="6.500" /><circle cx="126" cy="9" r="6.500" /><path d="M63.500 3.500h8v8l-4 4-4-4z" /></g>
          <path d="M5 9h6.500M122.500 9h7M126 5.500v7" stroke="#444c5c" strokeWidth="1.600" />
        </svg>
      </div>
    </div>
  );
}

/* ---------- taskbar ---------- */

const APPS: { id: string; open?: boolean; icon: React.ReactNode }[] = [
  { id: "start", icon: <path d="M5 6.300l6-.8v5.700H5zM12 5.300l8-1.200v7.100h-8zM5 12.200h6v5.700l-6-.8zM12 12.200h8v7.100l-8-1.200z" fill="#fff" /> },
  { id: "search", icon: <g fill="none" stroke="#fff" strokeWidth="1.400"><circle cx="13.500" cy="9.500" r="5.500" /><path d="M9.500 13.500L4 19.500" /></g> },
  { id: "views", icon: <g fill="none" stroke="#fff" strokeWidth="1.200"><path d="M6.500 5.500h11v13h-11zM4 7.500H2.500v9H4M20 7.500h1.500v9H20" /></g> },
  { id: "edge", icon: <path d="M2 10.500C3 4.500 7 2 12 2c6 0 10 4 10 9v2.500H8.500c.2 3.500 3 5 6 5 2.500 0 4.500-.6 6-1.500v4.200c-2 1.200-4.500 1.800-7 1.800C7.500 23 4 19 4 15c0-3.500 1.800-6 5-7.500-1 1.200-1.200 2.200-1.200 3H16c0-3-1.500-4.500-4.500-4.500C8 6 4.500 7.500 2 10.500z" fill="#0f86e8" /> },
  { id: "files", icon: <g><path d="M1 3h8l2 2h12v16H1z" fill="#f6cf66" /><path d="M1 7h22v14H1z" fill="#fde08a" /><path d="M5 21v-8h14v8h-4v-4H9v4z" fill="#33aee8" /></g> },
  { id: "outlook", open: true, icon: <g><path d="M3 2h14l-2 18H1z" fill="#f8c570" stroke="#fff" /><path d="M6 7h17v14H6z" fill="#fff3d6" stroke="#e0a030" /><circle cx="13.500" cy="13.500" r="6.500" fill="#fbcf63" stroke="#c98a1b" strokeWidth="1.500" /><path d="M10 12l3.500 3.500L19 11" stroke="#a46a10" fill="none" strokeWidth="1.500" /></g> },
  { id: "excel", open: true, icon: <g><path d="M4 1h13l-1 19H1z" fill="#d5ebc9" stroke="#fff" /><path d="M9 7h14v14H9zM9 11.500h14M9 16h14M14 7v14M18.500 7v14" fill="#f4faf0" stroke="#5d9a45" /><path d="M5 7l7 9M12 7l-8 9" stroke="#2f7d28" strokeWidth="2.600" /></g> },
  { id: "word", open: true, icon: <g><path d="M4 1h13l-1 20H1z" fill="#c8d9f4" stroke="#fff" /><path d="M12 5h11v16H10z" fill="#fff" stroke="#5d7fc0" /><path d="M16 8h5M16 11h5M13 15h8M13 18h8" stroke="#2f57a8" strokeWidth="1.500" /><path d="M5 7l1.500 7L9.500 8l2 6L15 7" stroke="#2449a0" strokeWidth="2" fill="none" /></g> },
  { id: "window", open: true, icon: <g><path d="M1.500 2.500h21v19h-21z" fill="#e9eefa" stroke="#b9c6e4" /><path d="M2 3h20v4H2z" fill="#3f6fd0" /></g> },
  { id: "chrome", open: true, icon: <g><circle cx="12" cy="12" r="11" fill="#fbd037" /><path d="M2.500 6.500A11 11 0 0122 7H12a5 5 0 00-4.500 7z" fill="#e04a3c" /><path d="M2.500 6.500A11 11 0 0012 23l5-8.500a5.500 5.500 0 01-9.500-.5z" fill="#3fa457" /><circle cx="12" cy="12" r="5.200" fill="#fff" /><circle cx="12" cy="12" r="4.200" fill="#4a86e8" /></g> },
  { id: "snip", icon: <g><ellipse cx="9.500" cy="7.500" rx="9" ry="6.500" fill="#efd3d7" transform="rotate(-15 10 8)" /><path d="M2.500 9l13-5.500M4 12.500l13-6" stroke="#c2454d" strokeWidth="1.300" /><path d="M12 10l7 7M20 9l-5 8" stroke="#c9d4e4" strokeWidth="1.500" /><circle cx="14.500" cy="19.500" r="2.500" fill="none" stroke="#3a8bc4" strokeWidth="1.500" /><circle cx="21" cy="18" r="2.300" fill="none" stroke="#3a8bc4" strokeWidth="1.500" /></g> },
  { id: "leaf", open: true, icon: <g><path d="M2 1h21v22H2z" fill="#e9ece9" /><path d="M10 11c-1-6 5-10 12-11 2 7-2 13-12 11z" fill="#147a52" /><path d="M0 23c0-6 4-10 11-9 0 6-4 10-11 9z" fill="#2fb53a" /><path d="M12 12c7-1 12 3 10 9-7 1-10-3-10-9z" fill="#9a8f92" /></g> },
  { id: "gc", open: true, icon: <g><circle cx="12" cy="12" r="11" fill="#3f7fc0" stroke="#d5e6f6" strokeWidth="1.600" /><text x="12" y="16" textAnchor="middle" fontSize="11" fontWeight="700" fill="#fff" fontFamily="Liberation Sans">GC</text></g> },
];

const TRAY: React.ReactNode[] = [
  <g fill="none" stroke="#fff"><path d="M3.500 5.500h7v10h-7zM4.500 5.500v-5h5v5" /><path d="M9 13l3 3 4-6" /></g>,
  <g><path d="M2 1h11l1 14H2z" fill="#f8d08a" /><circle cx="9" cy="9" r="5.500" fill="#fff0cc" stroke="#d99a2a" strokeWidth="1.600" /><path d="M6.500 8L9 10.500 12 7" stroke="#b06f12" fill="none" /></g>,
  <g><path d="M0 9c0-11 16-11 16 0z" fill="#e0aa86" /><path d="M6 8h4l2 7.500H4z" fill="#f8e6c0" /></g>,
  <g><path d="M4 1h8v6H4z" fill="#dff1fb" /><path d="M1 7h14v6H1z" fill="#b9c6d2" /><path d="M4 11h8v4H4z" fill="#8bc6e8" /></g>,
  <g><path d="M1 0h14v16H1z" fill="#2b93e0" /><path d="M3 4h4v4H3zM9 3h4v5H9zM4 10h8v3H4z" fill="none" stroke="#fff" /></g>,
  <path d="M1 13c-1-4 2-5 3-5 1-5 7-5 8-1 4 0 4 6 2 6z" fill="#8a8a8a" />,
  <g><path d="M3 1c-1 8 4 13 12 12z" fill="#3a3a3a" stroke="#d5d5d5" /><path d="M3 10l-2 5h7z" stroke="#eee" fill="#ddd" /><path d="M8 8l4-4" stroke="#eee" /></g>,
  <g fill="none" stroke="#fff" strokeWidth="1.200"><path d="M5.500 4.500h10v7h-10zM8 14.500h6M11 12v2M.5 1.500h4v4h-4zM2.500 5.500v6h3" /></g>,
  <g fill="none" stroke="#fff" strokeWidth="1.200"><path d="M1 6h2.500l3-3v10l-3-3H1zM10 6l4 4M14 6l-4 4" /></g>,
  <g fill="none" stroke="#fff" strokeWidth="1.200"><path d="M1 1.500h14v10.500H9v3l-3-3H1zM4 4.500h8M4 7h8M4 9.500h5" /></g>,
];

function Taskbar() {
  return (
    <footer className="flex h-[40px] shrink-0 bg-[#02040a] text-[12px] text-white">
      <div className="-ml-[1px] flex">
        {APPS.map((a) => (
          <div key={a.id} className="flex w-[48.900px] shrink-0 flex-col items-center">
            <svg width="24" height="24" viewBox="0 0 24 24" className="mt-[8px] h-[23px] w-[23px]">{a.icon}</svg>
            {a.open && <span className="mt-auto h-[2px] w-[40px] bg-[#76b9ed]" />}
          </div>
        ))}
      </div>
      <div className="ml-auto flex items-center gap-[8px]">
        {TRAY.map((n, i) => (
          <svg key={i} width="16" height="16" viewBox="0 0 16 16">{n}</svg>
        ))}
      </div>
      <div className="ml-[8px] flex w-[68px] flex-col items-center pt-[2px] leading-[17px] tracking-[-0.600px]">
        <span className="ml-[2px]">18:08</span>
        <span>18/07/2016</span>
      </div>
      <div className="ml-[7px] mr-[4px] h-[40px] w-px bg-[#444]" />
    </footer>
  );
}

export default function App() {
  return (
    <div className={"flex h-[1080px] w-[1920px] flex-col overflow-hidden bg-[#bfdbff] " + UI}>
      <TitleBar />
      <TabRow />
      <Ribbon />
      <FormulaBar />
      <div className="h-[4px] shrink-0 border-b border-[#7b9cc9] bg-[#d5e4f7]" />
      <div className="flex h-[834px] shrink-0">
        <Sheet />
        <VScroll />
      </div>
      <SheetTabs />
      <StatusBar />
      <Taskbar />
    </div>
  );
}
